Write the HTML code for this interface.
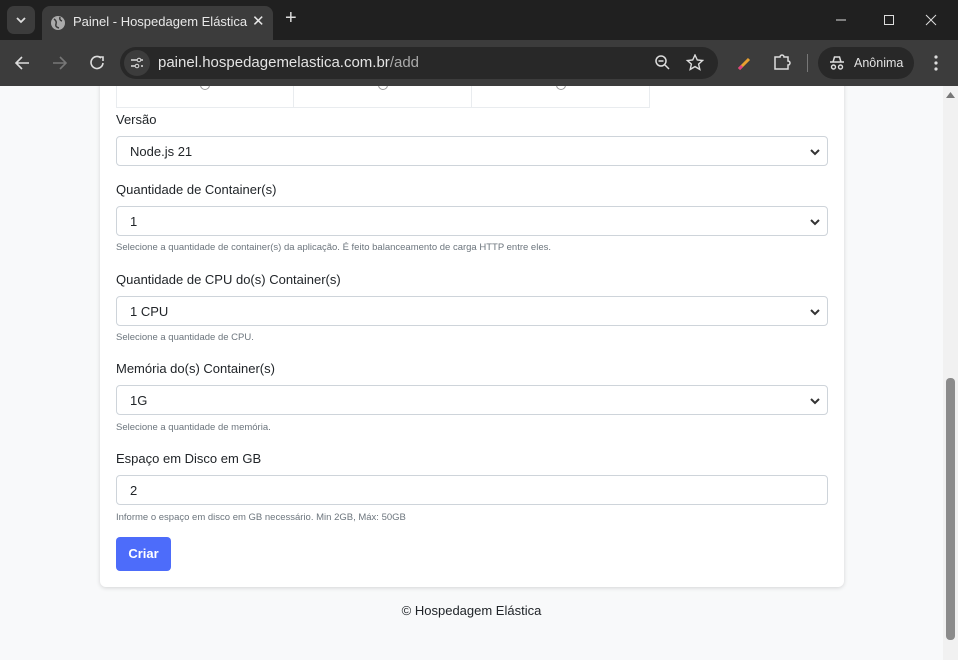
<!DOCTYPE html>
<html><head><meta charset="utf-8"><style>
*{box-sizing:border-box;margin:0;padding:0}
body{width:958px;height:660px;overflow:hidden;background:#f8f9fa;font-family:"Liberation Sans",sans-serif;position:relative}
.top{position:absolute;left:0;top:0;width:958px;height:40px;background:#202020}
.tab{position:absolute;left:42px;top:6px;width:231px;height:34px;background:#3c3c3c;border-radius:8px 8px 0 0;color:#e8e8e8;font-size:13px}
.bar{position:absolute;left:0;top:40px;width:958px;height:46px;background:#3c3c3c}
.url{position:absolute;left:120px;top:7px;width:598px;height:32px;background:#282828;border-radius:16px;color:#e3e3e3;font-size:15px}
.anon{position:absolute;left:818px;top:7px;width:96px;height:32px;background:#282828;border-radius:16px;color:#e3e3e3;font-size:12.5px}
.page{position:absolute;left:0;top:86px;width:943px;height:574px;background:#f8f9fa;overflow:hidden}
.card{position:absolute;left:100px;top:-20px;width:744px;height:521px;background:#fff;border-radius:6px;box-shadow:0 1px 4px rgba(0,0,0,.15)}
.lbl{position:absolute;left:116px;font-size:13px;color:#212529}
.sel{position:absolute;left:116px;width:712px;height:30px;border:1px solid #ced4da;border-radius:4px;font-size:13px;color:#212529;padding:7px 13px}
.sel svg{position:absolute;right:6px;top:10px}
.hint{position:absolute;left:116px;font-size:9.5px;color:#6c757d}
.sb{position:absolute;left:943px;top:86px;width:15px;height:574px;background:#f1f1f1}
.rc{position:absolute;top:-6px;width:10px;height:10px;border:1px solid #999;border-radius:50%}
</style></head><body>
<div class="top">
<div style="position:absolute;left:7px;top:6px;width:28px;height:28px;background:#3c3c3c;border-radius:7px"><svg width="28" height="28"><path d="M10 12l4 4 4-4" stroke="#ddd" stroke-width="1.8" fill="none"/></svg></div>
<div class="tab"><svg style="position:absolute;left:8px;top:9px" width="16" height="16"><circle cx="8" cy="8" r="7" fill="#aaa"/><path d="M4 4q3 2 2 5t3 4M10 2q-1 3 2 4" stroke="#3c3c3c" stroke-width="1.5" fill="none"/></svg><span style="position:absolute;left:31px;top:8px">Painel - Hospedagem Elástica</span><span style="position:absolute;left:210px;top:6px;font-size:15px">✕</span></div>
<span style="position:absolute;left:285px;top:7px;color:#ddd;font-size:20px">+</span>
<svg style="position:absolute;left:836px;top:12px" width="110" height="16"><path d="M0 8h10" stroke="#ddd"/><rect x="48.5" y="3.5" width="9" height="9" stroke="#ddd" fill="none"/><path d="M90 3l10 10M100 3l-10 10" stroke="#ddd"/></svg>
</div>
<div class="bar">
<svg style="position:absolute;left:14px;top:14px" width="100" height="18"><path d="M2 9h13M8 3L2 9l6 6" stroke="#ddd" stroke-width="1.6" fill="none"/><path d="M39 9h13M46 3l6 6-6 6" stroke="#777" stroke-width="1.6" fill="none"/><path d="M87 4a6 6 0 1 0 2 5" stroke="#ddd" stroke-width="1.6" fill="none"/><path d="M85 3h4v4" stroke="#ddd" stroke-width="1.6" fill="none"/></svg>
<div class="url"><div style="position:absolute;left:4px;top:3px;width:26px;height:26px;border-radius:13px;background:#3c3c3c"></div><svg style="position:absolute;left:10px;top:9px" width="14" height="14"><path d="M1 4h6M1 10h4M11 4h2M11 10h2" stroke="#ddd" stroke-width="1.4"/><circle cx="9" cy="4" r="1.8" stroke="#ddd" fill="none"/><circle cx="7" cy="10" r="1.8" stroke="#ddd" fill="none"/></svg><span style="position:absolute;left:38px;top:7px">painel.hospedagemelastica.com.br<span style="color:#aaa">/add</span></span>
<svg style="position:absolute;left:534px;top:7px" width="50" height="18"><circle cx="7" cy="7" r="5" stroke="#ddd" stroke-width="1.5" fill="none"/><path d="M4.5 7h5M11 11l4 4" stroke="#ddd" stroke-width="1.5"/><path d="M41 1l2.3 5 5.3.5-4 3.6 1.2 5.3-4.8-2.8-4.8 2.8 1.2-5.3-4-3.6 5.3-.5z" stroke="#ddd" stroke-width="1.4" fill="none"/></svg></div>
<svg style="position:absolute;left:737px;top:16px" width="16" height="16"><path d="M2 13L12 3" stroke="#e8a030" stroke-width="3"/><path d="M2 13l3-3" stroke="#e04080" stroke-width="3"/></svg>
<svg style="position:absolute;left:773px;top:13px" width="18" height="18"><path d="M2 4h5a2 2 0 0 1 4 0h4v4a2 2 0 0 1 0 4v4H2z" stroke="#ddd" stroke-width="1.5" fill="none"/></svg>
<div style="position:absolute;left:807px;top:14px;width:1px;height:18px;background:#777"></div>
<div class="anon"><svg style="position:absolute;left:11px;top:8px" width="16" height="16"><path d="M1 7h14M4 7l1.5-5h5L12 7" stroke="#ddd" stroke-width="1.5" fill="none"/><circle cx="4.5" cy="12" r="2" stroke="#ddd" fill="none" stroke-width="1.4"/><circle cx="11.5" cy="12" r="2" stroke="#ddd" fill="none" stroke-width="1.4"/></svg><span style="position:absolute;left:36px;top:9px">Anônima</span></div>
<svg style="position:absolute;left:933px;top:14px" width="6" height="18"><circle cx="3" cy="3" r="1.6" fill="#ddd"/><circle cx="3" cy="9" r="1.6" fill="#ddd"/><circle cx="3" cy="15" r="1.6" fill="#ddd"/></svg>
</div>
<div class="page"><div class="card"></div>
<div style="position:absolute;left:116px;top:-10px;width:178px;height:32px;border:1px solid #e9ecef;border-top:none"></div>
<div style="position:absolute;left:294px;top:-10px;width:178px;height:32px;border:1px solid #e9ecef;border-top:none;border-left:none"></div>
<div style="position:absolute;left:472px;top:-10px;width:178px;height:32px;border:1px solid #e9ecef;border-top:none;border-left:none"></div>
<div class="rc" style="left:200px"></div><div class="rc" style="left:378px"></div><div class="rc" style="left:556px"></div>
</div>
<div class="lbl" style="top:112px">Versão</div>
<div class="sel" style="top:136px">Node.js 21<svg width="12" height="10"><path d="M2 3l4 4 4-4" stroke="#333" stroke-width="2" fill="none"/></svg></div>
<div class="lbl" style="top:182px">Quantidade de Container(s)</div>
<div class="sel" style="top:206px">1<svg width="12" height="10"><path d="M2 3l4 4 4-4" stroke="#333" stroke-width="2" fill="none"/></svg></div>
<div class="hint" style="top:242px">Selecione a quantidade de container(s) da aplicação. É feito balanceamento de carga HTTP entre eles.</div>
<div class="lbl" style="top:272px">Quantidade de CPU do(s) Container(s)</div>
<div class="sel" style="top:296px">1 CPU<svg width="12" height="10"><path d="M2 3l4 4 4-4" stroke="#333" stroke-width="2" fill="none"/></svg></div>
<div class="hint" style="top:332px">Selecione a quantidade de CPU.</div>
<div class="lbl" style="top:361px">Memória do(s) Container(s)</div>
<div class="sel" style="top:385px">1G<svg width="12" height="10"><path d="M2 3l4 4 4-4" stroke="#333" stroke-width="2" fill="none"/></svg></div>
<div class="hint" style="top:422px">Selecione a quantidade de memória.</div>
<div class="lbl" style="top:451px">Espaço em Disco em GB</div>
<div class="sel" style="top:475px">2</div>
<div class="hint" style="top:512px">Informe o espaço em disco em GB necessário. Min 2GB, Máx: 50GB</div>
<div style="position:absolute;left:116px;top:537px;width:55px;height:34px;background:#4d6cfa;border-radius:4px;color:#fff;font-size:13px;font-weight:bold;text-align:center;line-height:34px">Criar</div>
<div style="position:absolute;left:0;width:943px;top:603px;text-align:center;font-size:13px;color:#212529">© Hospedagem Elástica</div>
<div class="sb"><svg style="position:absolute;left:3px;top:6px" width="9" height="6"><path d="M0 6L4.5 0 9 6z" fill="#777"/></svg><div style="position:absolute;left:3px;top:292px;width:9px;height:262px;background:#8b8b8b;border-radius:4px"></div></div>
</body></html>
